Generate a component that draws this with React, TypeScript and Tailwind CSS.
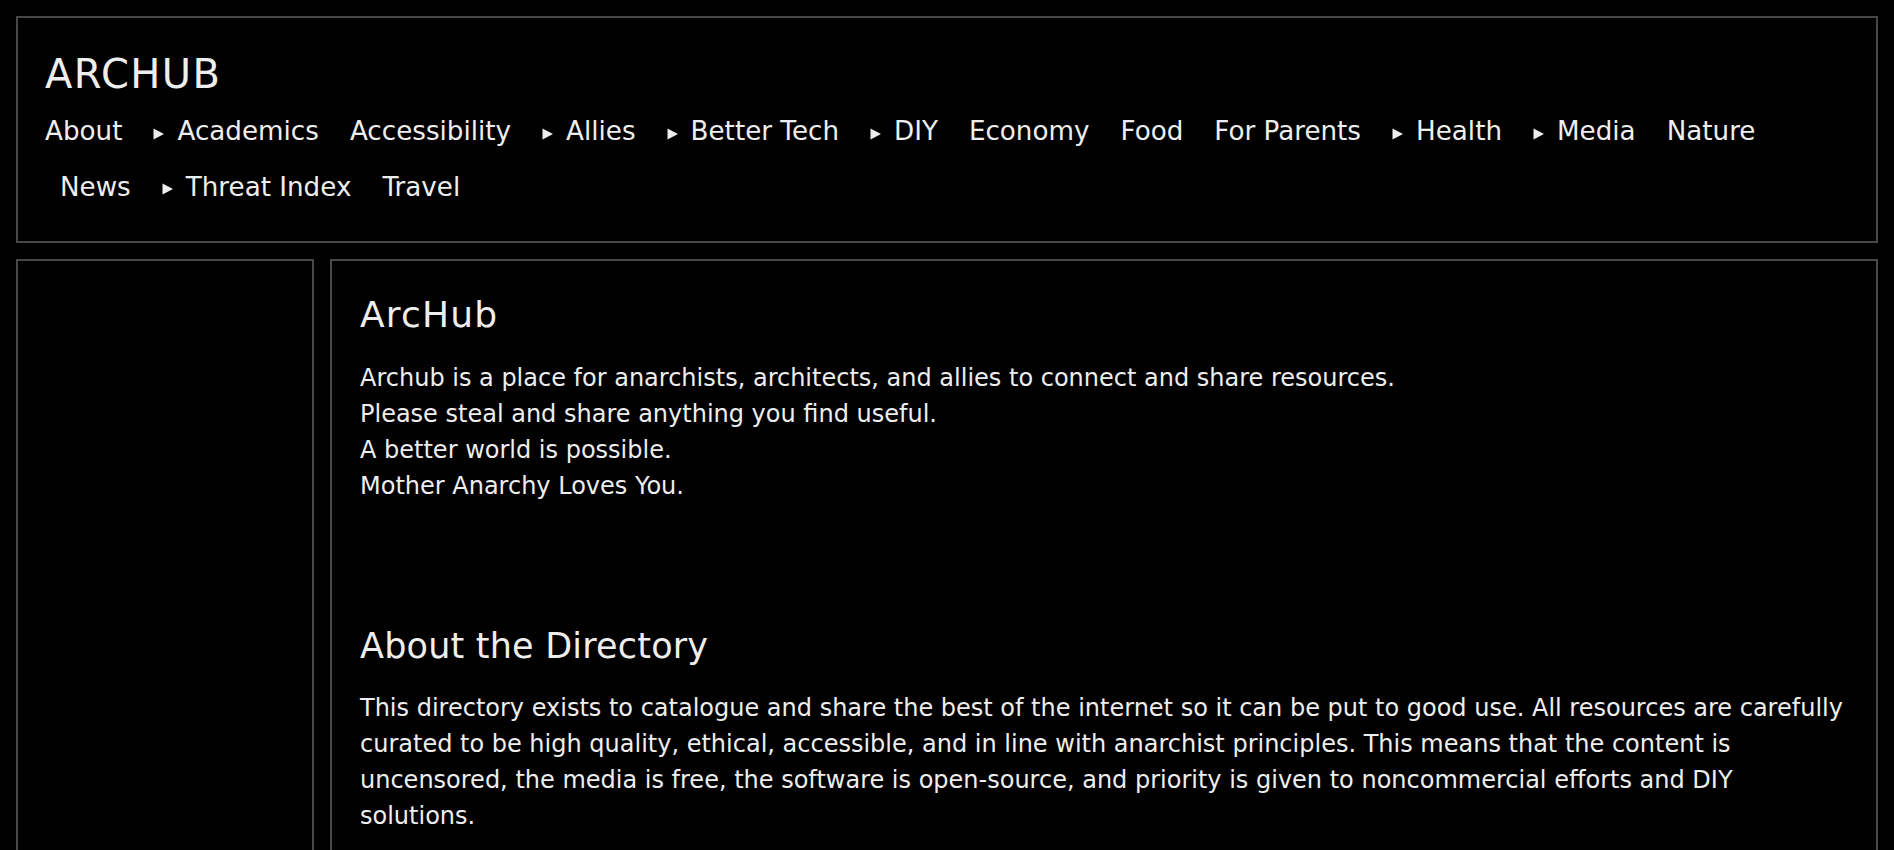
import React from 'react'

const navItems = [
  { label: 'About' },
  { label: 'Academics', folder: true },
  { label: 'Accessibility' },
  { label: 'Allies', folder: true },
  { label: 'Better Tech', folder: true },
  { label: 'DIY', folder: true },
  { label: 'Economy' },
  { label: 'Food' },
  { label: 'For Parents' },
  { label: 'Health', folder: true },
  { label: 'Media', folder: true },
  { label: 'Nature' },
  { label: 'News' },
  { label: 'Threat Index', folder: true },
  { label: 'Travel' },
]

function Arrow() {
  return (
    <svg width="12" height="12" viewBox="0 0 12 12" className="mr-3 translate-y-[2px] shrink-0">
      <polygon points="0.5,0.5 11,6 0.5,11.5" fill="#eeeeee" />
    </svg>
  )
}

export default function App() {
  return (
    <div className="h-screen overflow-hidden bg-black p-4 flex flex-col gap-4 text-[#eeeeee] font-['DejaVu_Sans',sans-serif]">
      <header className="border-2 border-[#474747] px-[27px] py-[26px]">
        <h1 className="text-[40px] leading-[60px] font-normal tracking-[1.4px]">ARCHUB</h1>
        <nav className="flex flex-wrap gap-x-[31px] pl-[15px] text-[26.2px] leading-[55.5px]">
          {navItems.map((item, i) => (
            <a
              key={item.label}
              href="#"
              className={`flex items-center whitespace-nowrap ${i === 0 ? '-ml-[15px]' : ''}`}
            >
              {item.folder && <Arrow />}
              {item.label}
            </a>
          ))}
        </nav>
      </header>

      <div className="flex gap-4 min-h-[620px] shrink-0">
        <aside className="w-[298px] shrink-0 border-2 border-[#474747]" />

        <main className="flex-1 border-2 border-[#474747] pl-[28px] pr-[27px] pt-[27px] pb-[26px]">
          <h2 className="text-[36px] leading-[54px] font-normal tracking-[1.2px] mb-[18px]">ArcHub</h2>
          <p className="text-[24px] leading-[36px]">
            Archub is a place for anarchists, architects, and allies to connect and share resources.
            <br />
            Please steal and share anything you find useful.
            <br />
            A better world is possible.
            <br />
            Mother Anarchy Loves You.
          </p>

          <h2 className="mt-[116px] text-[35px] leading-[52px] font-normal tracking-[0.2px] mb-[18px]">
            About the Directory
          </h2>
          <p className="text-[24px] leading-[36px]">
            This directory exists to catalogue and share the best of the internet so it can be put to good use. All
            resources are carefully curated to be high quality, ethical, accessible, and in line with anarchist
            principles. This means that the content is uncensored, the media is free, the software is open-source, and
            priority is given to noncommercial efforts and DIY solutions.
          </p>
        </main>
      </div>
    </div>
  )
}
